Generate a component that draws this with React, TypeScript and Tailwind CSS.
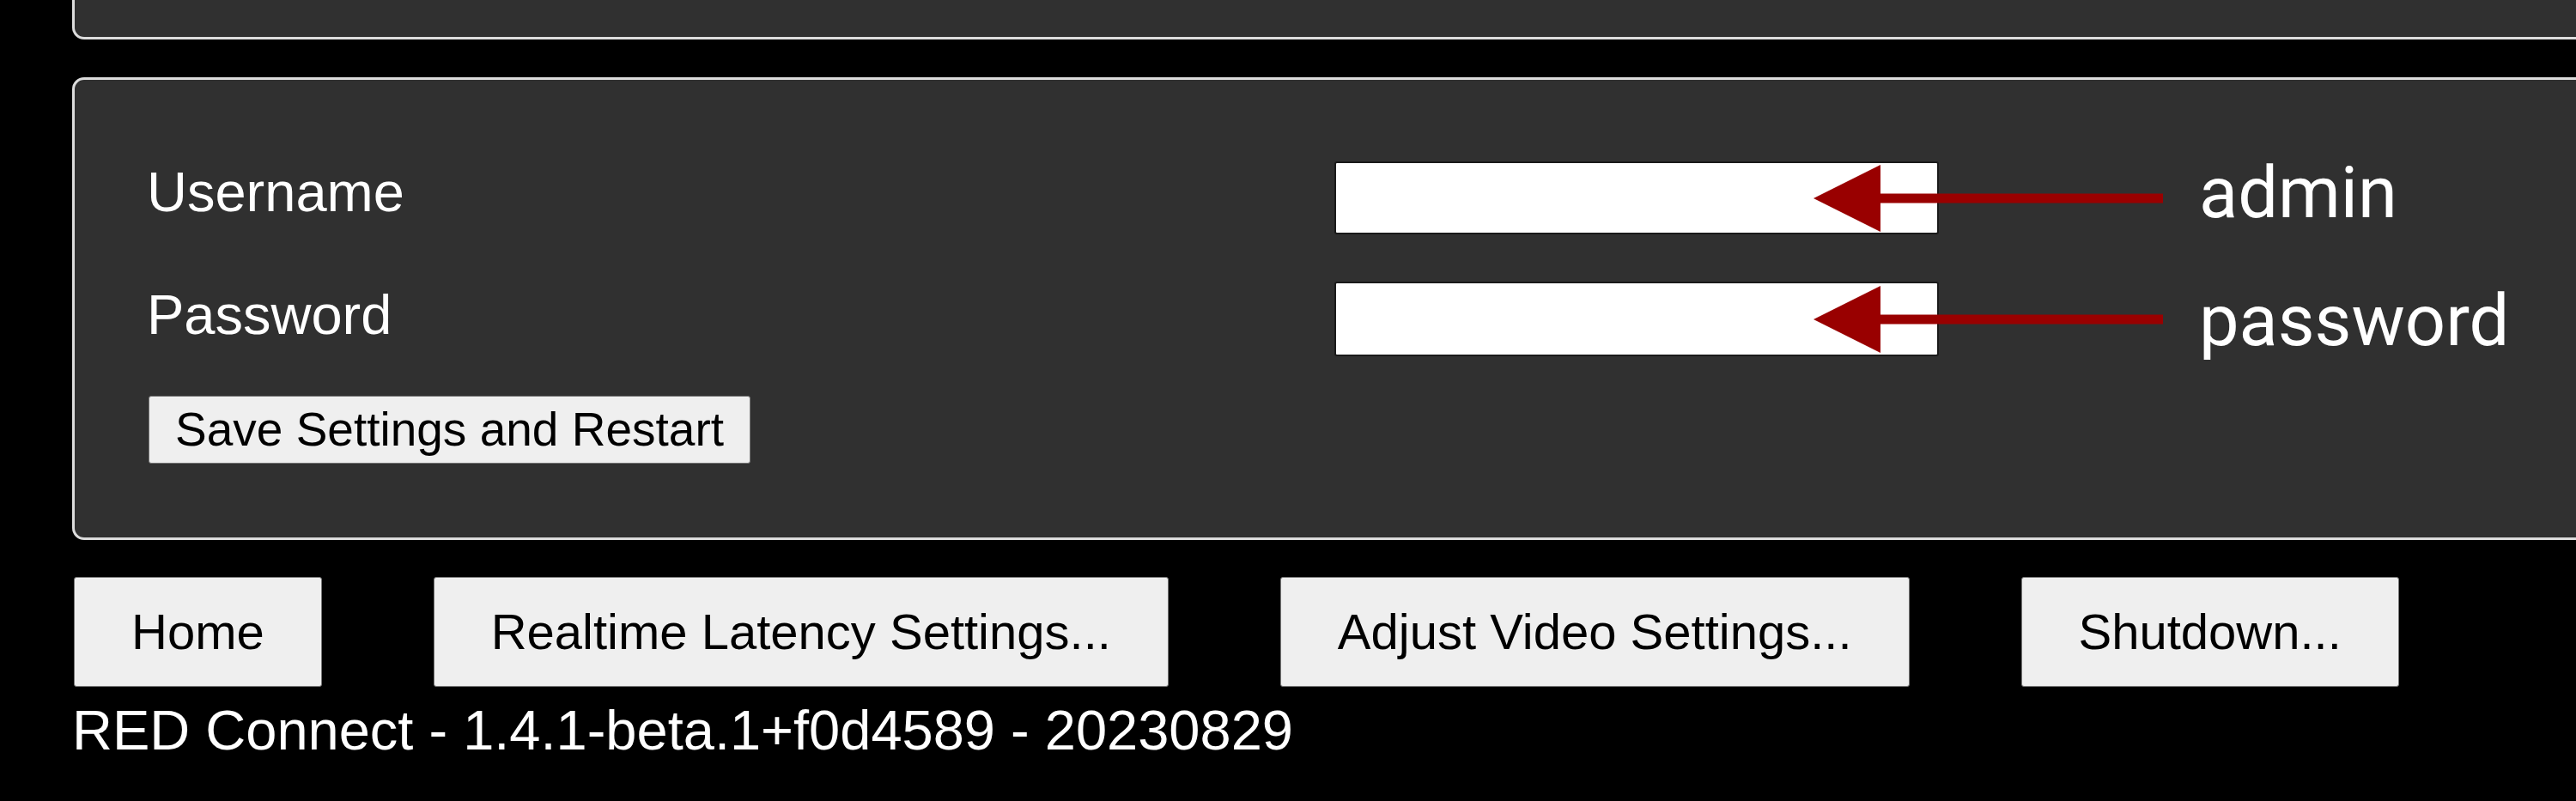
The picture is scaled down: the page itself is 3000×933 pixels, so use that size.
import { FunctionComponent } from "react";

interface RowProps {
  label: string;
  hint: string;
  rowClass: string;
  labelClass: string;
  inputClass: string;
  hintClass: string;
}

const navButtons: string[] = [
  "Home",
  "Realtime Latency Settings...",
  "Adjust Video Settings...",
  "Shutdown...",
];

const Arrow: FunctionComponent = () => (
  <svg
    width="407"
    height="80"
    viewBox="0 0 407 80"
    className="absolute left-[558px] top-1/2 -translate-y-1/2"
  >
    <polygon points="0,40 78,1 78,79" fill="#990000" />
    <rect x="77" y="34.5" width="330" height="11" fill="#990000" />
  </svg>
);

const FieldRow: FunctionComponent<RowProps> = ({
  label,
  hint,
  rowClass,
  labelClass,
  inputClass,
  hintClass,
}) => (
  <div className={`flex items-start ${rowClass}`}>
    <label className={`w-[1386px] shrink-0 pl-[3px] text-[65px] leading-[65px] ${labelClass}`}>
      {label}
    </label>
    <div className="relative shrink-0">
      <input
        type="text"
        className={`block w-[704px] rounded-[3px] border-2 border-[#1a1a1a] bg-white outline-none ${inputClass}`}
      />
      <Arrow />
    </div>
    <span
      className={`ml-[303px] shrink-0 font-['Roboto',sans-serif] text-[83px] leading-[83px] text-white ${hintClass}`}
    >
      {hint}
    </span>
  </div>
);

const App: FunctionComponent = () => {
  return (
    <div className="h-[933px] w-full overflow-hidden bg-black pl-[84px] font-['Liberation_Sans',Arial,sans-serif] text-white">
      {/* panel cut off at the top of the shot */}
      <div className="h-[46px] w-[3000px] rounded-b-[14px] border-[3px] border-t-0 border-[#dcdcdc] bg-[#303030]" />

      <div className="mt-[44px] w-[3000px] rounded-[14px] border-[3px] border-[#dcdcdc] bg-[#303030] pb-[86px] pl-[81px] pt-[95px]">
        <FieldRow
          label="Username"
          hint="admin"
          rowClass=""
          labelClass="mt-[3px]"
          inputClass="h-[85px]"
          hintClass="-mt-[5px]"
        />
        <FieldRow
          label="Password"
          hint="password"
          rowClass="mt-[55px]"
          labelClass="mt-[6px]"
          inputClass="h-[87px]"
          hintClass="mt-[4px]"
        />
        <button className="ml-[5px] mt-[46px] block h-[79px] rounded-[3px] border border-[#767676] bg-[#efefef] px-[30px] text-[55px] leading-none text-black">
          Save Settings and Restart
        </button>
      </div>

      <div className="ml-[2px] mt-[43px] flex gap-[130px]">
        {navButtons.map((name) => (
          <button
            key={name}
            className="h-[128px] rounded-[3px] border border-[#767676] bg-[#efefef] px-[66px] text-[58px] leading-none text-black"
          >
            {name}
          </button>
        ))}
      </div>

      <div className="mt-[18px] text-[65px] leading-[65px]">
        RED Connect - 1.4.1-beta.1+f0d4589 - 20230829
      </div>
    </div>
  );
};

export default App;
